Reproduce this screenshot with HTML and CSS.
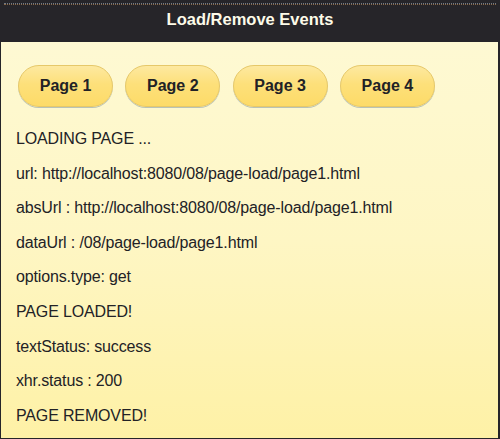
FILE: index.html
```html
<!DOCTYPE html>
<html>
<head>
<meta charset="utf-8">
<link rel="stylesheet" href="styles.css">
</head>
<body>
<div class="app">
  <header class="bar">
    <div class="dots"></div>
    <h1 class="title">Load/Remove Events</h1>
  </header>
  <main class="content">
    <nav class="buttons">
      <a class="btn">Page 1</a>
      <a class="btn">Page 2</a>
      <a class="btn">Page 3</a>
      <a class="btn">Page 4</a>
    </nav>
    <div class="log">
      <p>LOADING PAGE ...</p>
      <p>url: http://localhost:8080/08/page-load/page1.html</p>
      <p>absUrl : http://localhost:8080/08/page-load/page1.html</p>
      <p>dataUrl : /08/page-load/page1.html</p>
      <p>options.type: get</p>
      <p>PAGE LOADED!</p>
      <p>textStatus: success</p>
      <p>xhr.status : 200</p>
      <p>PAGE REMOVED!</p>
    </div>
  </main>
</div>
</body>
</html>
```

FILE: styles.css
```css
* { box-sizing: border-box; }
html, body { margin: 0; padding: 0; }
body {
  width: 500px;
  height: 439px;
  overflow: hidden;
  font-family: "Liberation Sans", Arial, sans-serif;
  background: #262529;
}
.app {
  width: 500px;
  height: 439px;
  display: flex;
  flex-direction: column;
}
.bar {
  height: 42px;
  background: #262529;
  padding-top: 3px;
}
.dots {
  height: 2px;
  margin: 0 4px;
  border-top: 1px dotted #6f7a86;
  border-bottom: 1px dotted #8a6a4a;
}
.title {
  margin: 4px 0 0 0;
  text-align: center;
  color: #fdfbe8;
  font-size: 16.5px;
  font-weight: bold;
  line-height: 20px;
}
.content {
  flex: 1;
  margin: 0 2px 1px 1px;
  background: linear-gradient(to bottom, #fef9d3 0%, #fef6c4 50%, #fef1a6 100%);
  padding: 23px 0 0 15px;
}
.buttons {
  display: flex;
  gap: 12.3px;
  margin-left: 2px;
}
.btn {
  width: 95px;
  height: 42px;
  border-radius: 21px;
  border: 1px solid #e6c869;
  background: linear-gradient(to bottom, #fde9a0 0%, #fde07a 45%, #fddb68 100%);
  box-shadow: 0 1px 0 #b8c3b8;
  display: flex;
  align-items: center;
  justify-content: center;
  font-weight: bold;
  font-size: 16px;
  color: #222226;
}
.log {
  margin-top: 23px;
  display: flex;
  flex-direction: column;
  gap: 16px;
}
.log p {
  margin: 0;
  font-size: 16px;
  line-height: 18.6px;
  color: #222226;
  letter-spacing: -0.15px;
}
```
